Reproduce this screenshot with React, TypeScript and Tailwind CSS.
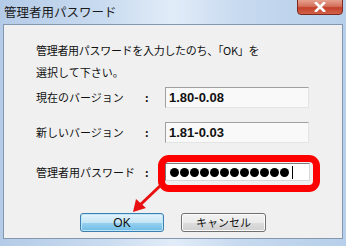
import React from "react";

const jp = { fontFamily: '"Noto Sans CJK JP", "Noto Sans", sans-serif' };

export default function App() {
  const dots = Array.from({ length: 12 });
  return (
    <div
      className="relative w-[346px] h-[246px] flex flex-col overflow-hidden bg-[linear-gradient(90deg,#b4cbe7_0%,#c9dbf0_30%,#e1ecf8_50%,#c6d9ef_70%,#b7cfea_100%)]"
      style={jp}
    >
      {/* title bar */}
      <div className="h-[24px] flex items-start justify-between pl-[4px] pr-[3px]">
        <div className="text-[12.5px] leading-[20px] pt-[2px] text-[#1a1a1a]">管理者用パスワード</div>
        <div className="w-[46px] h-[16px] mt-[-1px] rounded-b-[4px] border border-[#7a2a1e] bg-[linear-gradient(180deg,#e6a190_0%,#d4715c_45%,#c4402a_55%,#d2624a_100%)] flex items-center justify-center">
          <svg width="12" height="10" viewBox="0 0 12 10">
            <path d="M2 1 L10 9 M10 1 L2 9" stroke="#ffffff" strokeWidth="2.6" strokeLinecap="square" />
          </svg>
        </div>
      </div>
      {/* body */}
      <div className="mx-[3px] h-[215px] bg-[#f0f0f0] border border-[#8397b0] pl-[32px] pt-[14px] text-[11px] text-[#111]">
        <div className="leading-[22px] tracking-[-0.3px]">管理者用パスワードを入力したのち、「OK」を</div>
        <div className="leading-[22px]">選択して下さい。</div>
        <div className="mt-[4px] flex items-center h-[21px]">
          <div className="w-[109px]">現在のバージョン</div>
          <div className="w-[20px] font-bold">:</div>
          <div className="w-[144px] h-[21px] border-t border-l border-[#a0a0a0] border-b border-r border-b-[#e4e4e4] border-r-[#e4e4e4] bg-[#f9f9f9] pl-[3px] flex items-center text-[13px] font-bold" style={{ fontFamily: '"Liberation Sans", Arial, sans-serif' }}>
            1.80-0.08
          </div>
        </div>
        <div className="mt-[14px] flex items-center h-[21px]">
          <div className="w-[109px]">新しいバージョン</div>
          <div className="w-[20px] font-bold">:</div>
          <div className="w-[144px] h-[21px] border-t border-l border-[#a0a0a0] border-b border-r border-b-[#e4e4e4] border-r-[#e4e4e4] bg-[#f9f9f9] pl-[3px] flex items-center text-[13px] font-bold" style={{ fontFamily: '"Liberation Sans", Arial, sans-serif' }}>
            1.81-0.03
          </div>
        </div>
        <div className="mt-[20px] flex items-center h-[18px]">
          <div className="w-[109px]">管理者用パスワード</div>
          <div className="w-[20px] font-bold">:</div>
          <div className="w-[145px] h-[18px] bg-white border border-[#7a7a7a] border-b-[#d8d8d8] border-r-[#d8d8d8] flex items-center pl-[4px] gap-[1px]">
            {dots.map((_, i) => (
              <span key={i} className="block w-[9px] h-[9px] rounded-full bg-black" />
            ))}
            <span className="block w-[1px] h-[13px] bg-black ml-[2px]" />
          </div>
        </div>
        <div className="mt-[32px] flex ml-[44px] gap-[17px]">
          <div className="w-[84px] h-[19px] rounded-[3px] border border-[#3c7fb1] bg-[linear-gradient(180deg,#e5f4fc_0%,#c4e5f6_50%,#98d1ef_52%,#6ebce6_100%)] shadow-[inset_0_0_0_1px_#bfe6fa] flex items-center justify-center text-[12px] leading-none" style={{ fontFamily: '"Liberation Sans", Arial, sans-serif' }}>
            OK
          </div>
          <div className="w-[85px] h-[19px] rounded-[3px] border border-[#707070] bg-[linear-gradient(180deg,#f2f2f2_0%,#ebebeb_50%,#dddddd_52%,#cfcfcf_100%)] shadow-[inset_0_0_0_1px_#fcfcfc] flex items-center justify-center text-[11px] leading-none">
            キャンセル
          </div>
        </div>
      </div>
      {/* red highlight overlay */}
      <div className="absolute left-[158px] top-[155px] w-[162px] h-[37px] border-[7px] border-[#ff0000] rounded-[11px]" />
      {/* arrow */}
      <svg className="absolute left-0 top-0" width="346" height="246" viewBox="0 0 346 246">
        <path d="M160 186 L140 205" stroke="#e81010" strokeWidth="3" strokeLinecap="round" />
        <path d="M133 212 L136 199 L146 208 Z" fill="#e81010" />
      </svg>
    </div>
  );
}
